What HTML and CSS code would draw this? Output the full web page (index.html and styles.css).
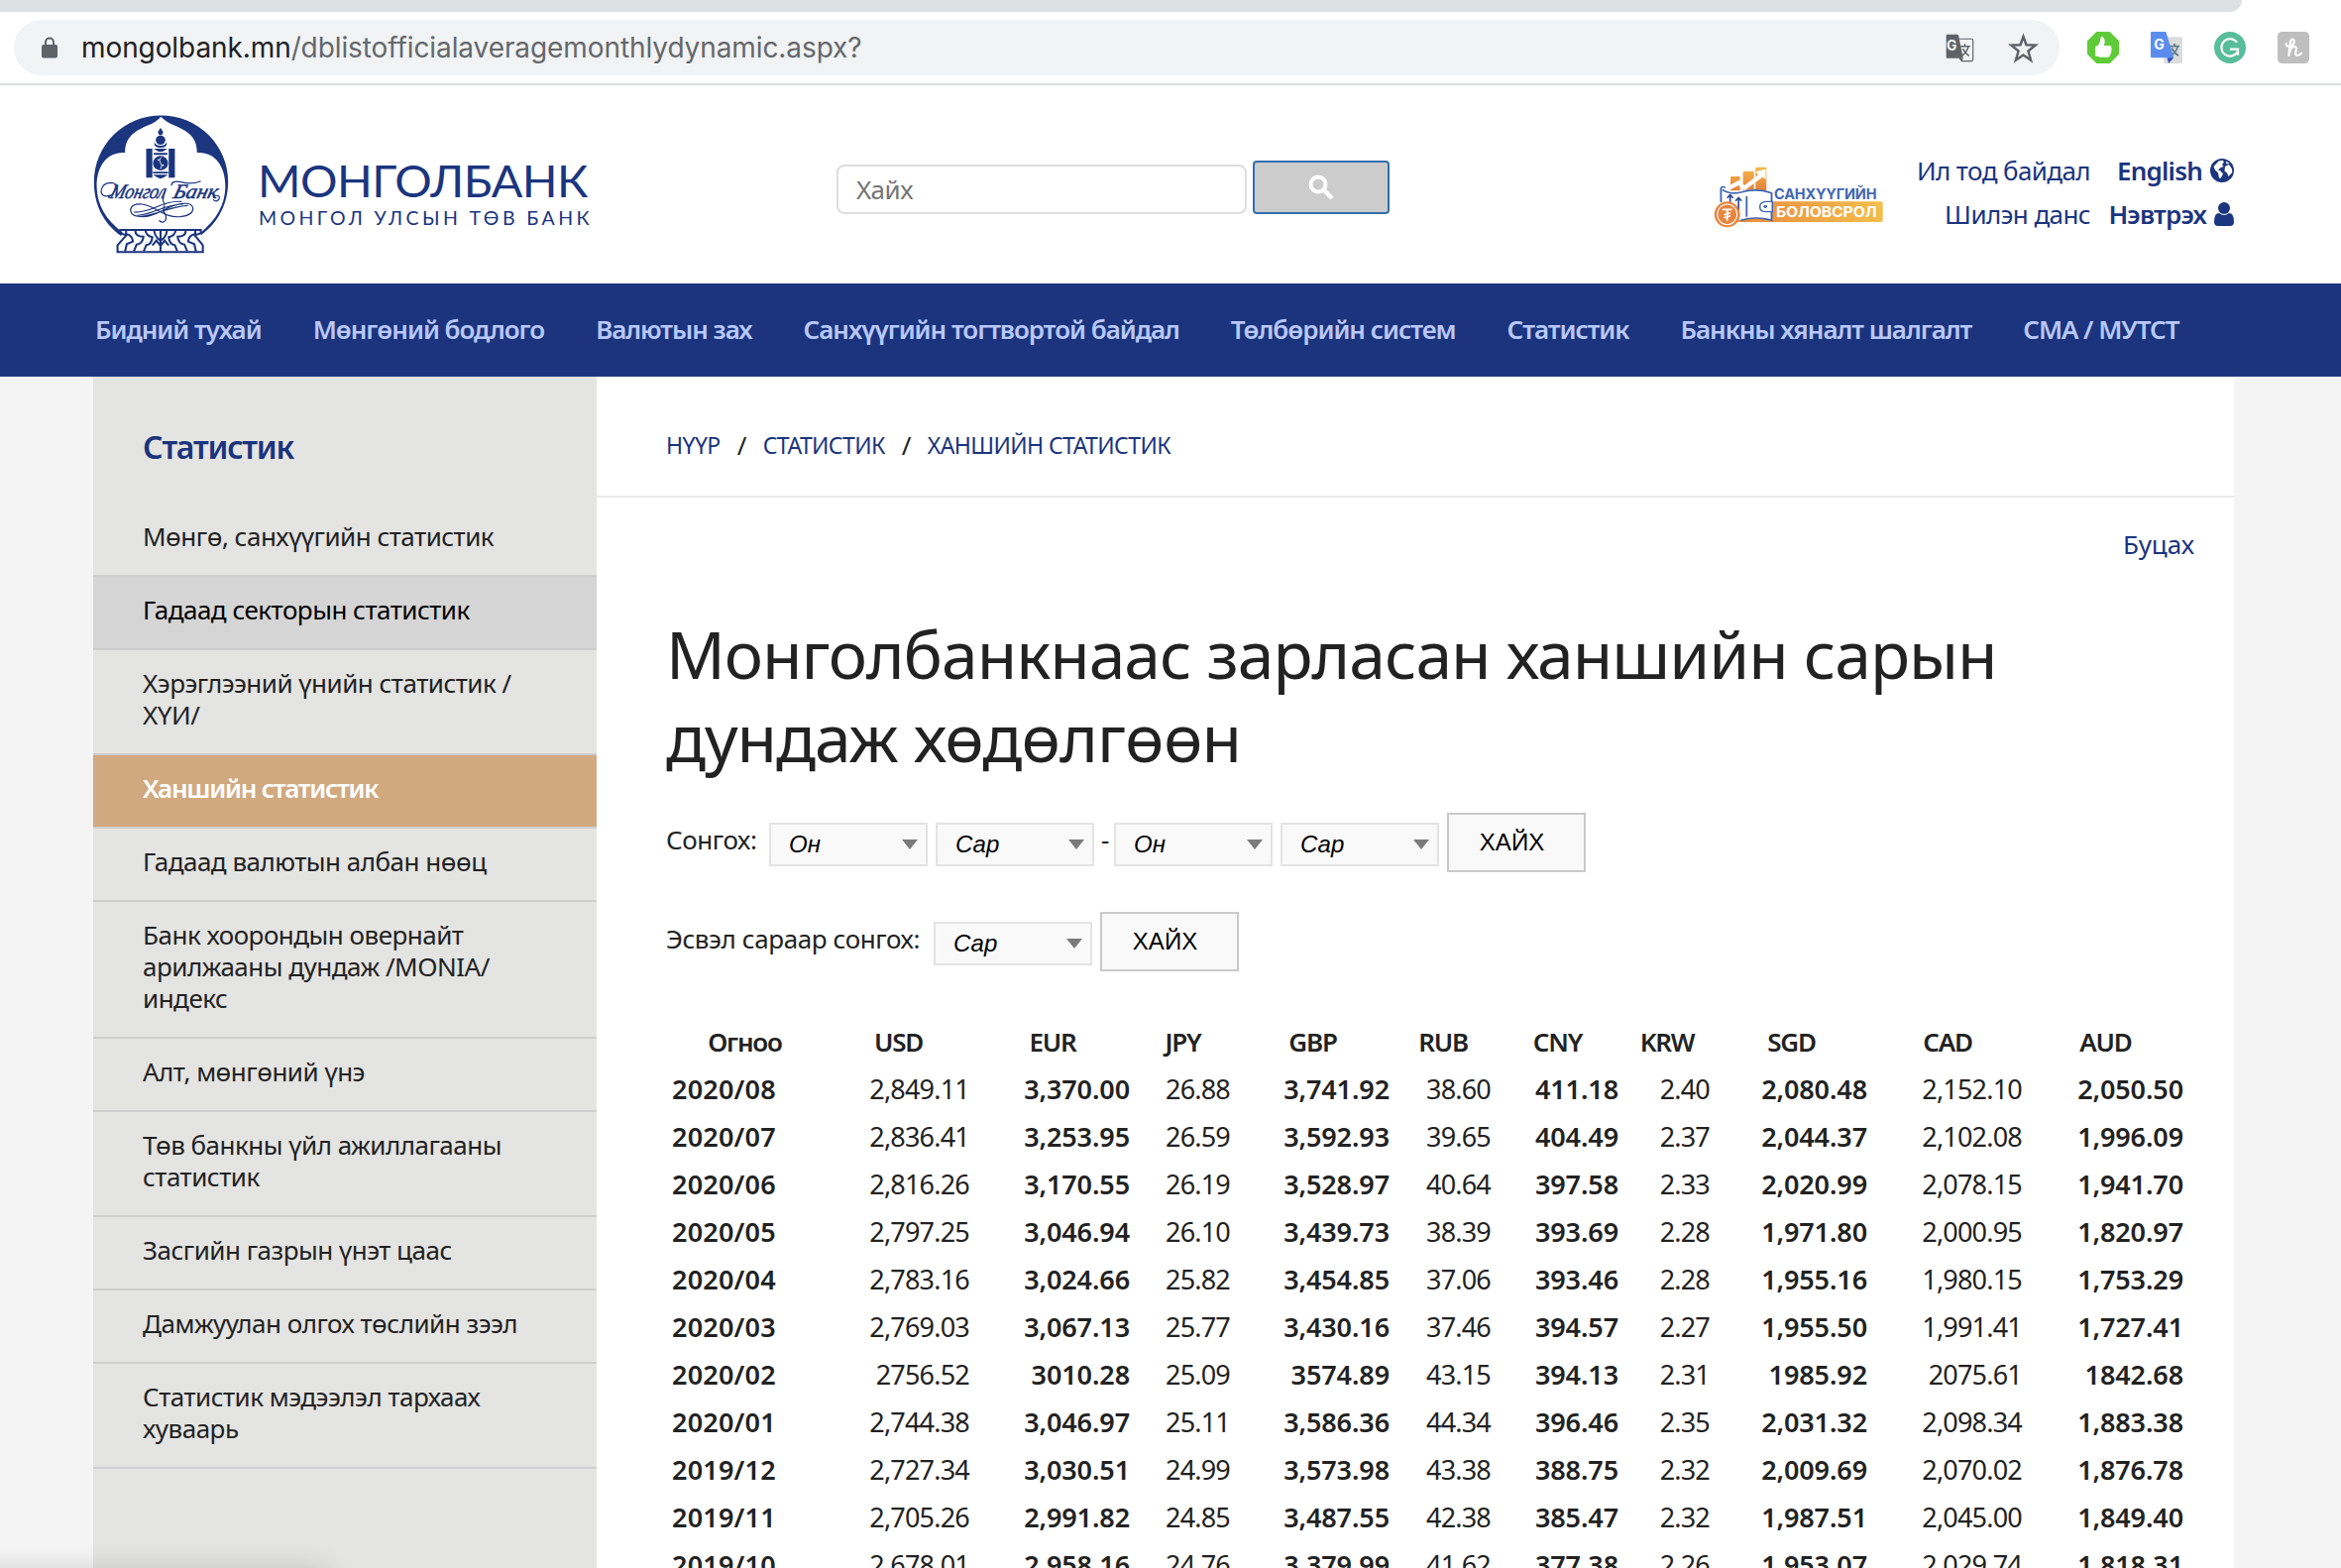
FILE: index.html
```
<!DOCTYPE html>
<html lang="mn">
<head>
<meta charset="utf-8">
<title>Монголбанк</title>
<link rel="stylesheet" href="styles.css">
</head>
<body>
<div class="browser">
  <div class="tabstrip"></div>
  <div class="toolbar">
    <div class="omnibox">
      <svg class="lock" viewBox="0 0 16 22"><path d="M4 9V5.500a4 4 0 0 1 8 0V9" fill="none" stroke="#5f6368" stroke-width="2"/><rect x="0" y="8" width="16" height="13.500" rx="2" fill="#5f6368"/></svg>
      <span class="url"><b>mongolbank.mn</b>/dblistofficialaveragemonthlydynamic.aspx?</span>
      <svg class="omni-icon" viewBox="190 100 88 88">
        <path d="M232 116h37q5 0 5 5v58q0 5-5 5h-29l-8-12" fill="none" stroke="#5f6368" stroke-width="3.500"/>
        <path d="M192 106q0-4 4-4h29q4 0 5 4l14 69h-48q-4 0-4-4z" fill="#5f6368"/><path d="M231 175h13l-4 11z" fill="#5f6368"/>
        <text x="193" y="151" font-family="Inter" font-weight="700" font-size="42" fill="#f1f3f4">G</text>
        <path d="M236 139h29M249 131v8M260 139q-4 17-20 29M243 146q7 14 19 22" fill="none" stroke="#5f6368" stroke-width="4.500"/>
      </svg>
      <svg class="omni-icon" viewBox="382 100 88 88"><path d="M426 109l9 25 28 1-22 18 8 28-23-16-23 16 8-28-22-18 28-1z" fill="none" stroke="#5f6368" stroke-width="7.500"/></svg>
    </div>
    <div class="extensions">
      <svg viewBox="618 96 96 96"><path d="M646 96h40l28 28v40l-28 28h-40l-28-28v-40z" fill="#5fcb38"/><path d="M642 141l8-3q8-9 8-20 0-8 5-7 8 3 8 15l-2 12h17q6 1 5 7 2 3 0 7 1 4-1 7 0 4-2 6-1 8-8 8h-20q-7 0-11-3h-7z" fill="#fff"/></svg>
      <svg viewBox="810 96 96 96"><rect x="850" y="112" width="56" height="80" rx="5" fill="#dcdcdc"/><path d="M866 140h31M882 132v8M892 140q-4 17-20 28M874 145q7 16 20 24" fill="none" stroke="#607d8b" stroke-width="5"/><path d="M814 96h42l24 79h-66q-4 0-4-4v-71q0-4 4-4z" fill="#5b8def"/><path d="M860 175h20l-16 17z" fill="#2f4fc0"/><text x="820" y="151" font-family="Inter" font-weight="700" font-size="42" fill="#fff">G</text></svg>
      <svg viewBox="1002 96 96 96"><circle cx="1050" cy="144" r="48" fill="#57bd9b"/><path d="M1071 128a26 26 0 1 0 2 28M1050 149h24v18" fill="none" stroke="#fff" stroke-width="6.500"/></svg>
      <svg viewBox="1194 96 96 96"><rect x="1194" y="96" width="96" height="96" rx="14" fill="#bfbfbf"/><path d="M1220 132q0 10 11 8 13-3 13-15 0-7-6-6-6 2-6 15l-4 34M1230 158q6-17 15-17 8 0 5 10-4 17 3 17 8 0 13-7" fill="none" stroke="#fff" stroke-width="6.500" stroke-linecap="round"/></svg>
    </div>
  </div>
</div>

<header class="header">
  <div class="brand">
    <svg class="emblem" viewBox="40.600 48 400.800 420" preserveAspectRatio="none" fill="#1b357f">
      <path d="M122 414C70 375 43 320 43 250A196 200 0 0 1 436 250C436 320 405 375 357 412L355 405C402 365 427 320 428 265C428 200 395 158 345 162C345 115 320 98 280 80Q255 70 239 53Q226 70 199 80C160 98 134 115 134 162C84 158 50 200 51 265C52 320 77 365 128 405Z"/>
      <path d="M238 87l8 13-4 9h-8l-4-9z"/><circle cx="238" cy="124" r="14"/>
      <path d="M220 128q3 13 18 13t18-13q3 19-18 19t-18-19zM218 150h40l-14 9h-12zM218 163h40v6h-40zM196 150h18v88h-18zM262 150h18v88h-18zM216 220h44v5h-44zM216 229h44l-11 7-11 5-11-5z"/>
      <circle cx="238" cy="194" r="22"/><path d="M240 176q-9 9-2 17t0 19" fill="none" stroke="#fff" stroke-width="2.500"/><circle cx="232" cy="184" r="2.500" fill="#fff"/><circle cx="245" cy="200" r="2.500" fill="#fff"/>
      <g font-family="Liberation Serif" font-style="italic" font-size="62" stroke="#1b357f" stroke-width="1.500">
        <text transform="translate(88 299) skewX(-14)" textLength="162" lengthAdjust="spacingAndGlyphs">Монгол</text>
        <text transform="translate(272 299) skewX(-14)" textLength="130" lengthAdjust="spacingAndGlyphs">Банк</text>
      </g>
      <g fill="none" stroke="#1b357f" stroke-width="3.500">
        <path d="M100 288q-33 14-36-8 1-25 27-27 22 0 16 18-8 20-23 27M270 262q0-17 28-11 32 9 58-3M396 292q18-2 14 10-8 12-18 2"/>
        <path d="M252 278q-14 28 0 42M150 338q0-22 34-20c42 6 62 42 112 38q38-4 37-26-2-16-30-14c-48 4-72 40-118 40q-32 0-35-18zM160 342c50 4 82-36 140-32M170 352c50-4 80-34 134-34M178 356c56-8 84-30 140-34M250 322q-8 12 1 24 8 20-3 25-9 4-14-4"/>
        <path stroke-width="6" d="M120 396h236v10l-18 6 24 30v21H112v-21l26-30-18-6z"/>
        <path stroke-width="6" d="M137 397v12q18 2 20 22l-18 8-5 22M164 398q0 18 24 18-2 22-20 24l-8 20M194 398q2 16 20 20-2 22-18 24l-7 18M219 398q4 22 19 30 16-8 19-30M238 398v65M282 398q-2 16-20 20 2 22 18 24l7 18M312 398q0 18-24 18 2 22 20 24l8 20M340 397v12q-19 2-21 22l18 8 5 22M214 443l12-15 12 16 12-16 12 15"/>
      </g>
    </svg>
    <svg class="wordmark" viewBox="0 0 334 72" fill="#1b357f" font-family="Lato, sans-serif">
      <text x="-2" y="44" font-size="44.500" textLength="333" lengthAdjust="spacingAndGlyphs">МОНГОЛБАНК</text>
      <text x="-1" y="72" font-size="19.500" textLength="333">МОНГОЛ УЛСЫН ТӨВ БАНК</text>
    </svg>
  </div>
  <form class="search">
    <div class="search-input">Хайх</div>
    <div class="search-button"><svg viewBox="0 0 26 26"><circle cx="10" cy="10" r="7.500" fill="none" stroke="#fff" stroke-width="4"/><path d="M16 16l8 8" stroke="#fff" stroke-width="4.500"/></svg></div>
  </form>
  <div class="tools">
    <svg class="finlogo" viewBox="80 80 470 195" preserveAspectRatio="none">
      <defs><linearGradient id="org" x1="0" x2="1"><stop offset="0" stop-color="#e8873c"/><stop offset="1" stop-color="#f4be4c"/></linearGradient><linearGradient id="bar" x1="0" x2="0" y1="0" y2="1"><stop offset="0" stop-color="#f4b94a"/><stop offset="1" stop-color="#e5803c"/></linearGradient></defs>
      <path d="M126 120q0-4 4-4h22v43h-26zM160 104q0-4 4-4h26v57h-30zM194 92q0-4 4-4h26v71h-30z" fill="url(#bar)"/>
      <path d="M103 156l46-29 15 16 38-32-8-9 28-8v30l-9-6-48 40-17-15-38 22z" fill="#fff"/>
      <path d="M118 254h417q6 0 6-6v-50q0-6-6-6H238z" fill="url(#org)"/>
      <path d="M100 156q22 18 54 6 42-14 84 4v83q-42-14-84 0l-54-20z" fill="#fff"/>
      <path d="M100 194v-42q2-8 12-2M104 156q22 16 50 8 42-14 84 2v83q-42-14-84 0M170 176v62" fill="none" stroke="#4267b0" stroke-width="5"/>
      <path d="M240 192h-18q-16 2-16 16t16 15h18z" fill="#fff" stroke="#4267b0" stroke-width="4"/><circle cx="221" cy="207" r="5" fill="#4267b0"/>
      <path d="M125 194v-20m-8 7l8-10 8 10M148 232v-50m-8 8l8-10 8 10" fill="none" stroke="#2c4a94" stroke-width="4.500"/>
      <ellipse cx="117" cy="231" rx="35" ry="39" fill="#e8853f"/><ellipse cx="117" cy="231" rx="27" ry="31" fill="none" stroke="#fff" stroke-width="3"/>
      <path d="M104 216h26M117 216v34M108 232l18-6M108 241l18-6" stroke="#fff" stroke-width="5"/>
      <text x="245" y="186" font-family="Inter" font-weight="700" font-size="43" fill="#4267b0" textLength="279" lengthAdjust="spacingAndGlyphs">САНХҮҮГИЙН</text>
      <text x="250" y="239" font-family="Inter" font-weight="700" font-size="43" fill="#fff" textLength="274" lengthAdjust="spacingAndGlyphs">БОЛОВСРОЛ</text>
    </svg>
    <div class="links"><span>Ил тод байдал</span><span>Шилэн данс</span></div>
    <div class="links account">
      <span>English <svg viewBox="0 0 24 24"><circle cx="12" cy="12" r="12" fill="#1b357f"/><path d="M8.500 2.500l4-.8 1.500 1.800-2 2.500 1.500 2-3 1.200-2.500 2.300 2.500 1 2.500 3-2.500 4.500-1.500-.5-1-5-3-3-1.500-3.500zM15 8l4-2 3 4.500.3 3.500-3.800 4-1.500-3.500-2.500-2zM16 2.500l3.500 2.500-3 .5z" fill="#fff"/></svg></span>
      <span>Нэвтрэх <svg class="user" viewBox="0 0 20 24"><circle cx="10" cy="6" r="6" fill="#1b357f"/><path d="M0 20q0-9 5-9 5 4 10 0 5 0 5 9 0 4-4 4H4q-4 0-4-4z" fill="#1b357f"/></svg></span>
    </div>
  </div>
</header>

<nav class="nav">
  <a>Бидний тухай</a><a>Мөнгөний бодлого</a><a>Валютын зах</a><a>Санхүүгийн тогтвортой байдал</a><a>Төлбөрийн систем</a><a>Статистик</a><a>Банкны хяналт шалгалт</a><a>СМА / МУТСТ</a>
</nav>

<div class="page">
  <aside class="sidebar">
    <h2>Статистик</h2>
    <ul>
      <li>Мөнгө, санхүүгийн статистик</li>
      <li class="hover">Гадаад секторын статистик</li>
      <li>Хэрэглээний үнийн статистик /<br>ХҮИ/</li>
      <li class="active">Ханшийн статистик</li>
      <li>Гадаад валютын албан нөөц</li>
      <li>Банк хоорондын овернайт<br>арилжааны дундаж /MONIA/<br>индекс</li>
      <li>Алт, мөнгөний үнэ</li>
      <li>Төв банкны үйл ажиллагааны<br>статистик</li>
      <li>Засгийн газрын үнэт цаас</li>
      <li>Дамжуулан олгох төслийн зээл</li>
      <li>Статистик мэдээлэл тархаах<br>хуваарь</li>
    </ul>
  </aside>
  <main class="content">
    <div class="crumbs"><a>НҮҮР</a><i>/</i><a>СТАТИСТИК</a><i>/</i><a>ХАНШИЙН СТАТИСТИК</a></div>
    <div class="back">Буцах</div>
    <h1>Монголбанкнаас зарласан ханшийн сарын<br>дундаж хөдөлгөөн</h1>
    <div class="filter">
      <label>Сонгох:</label>
      <div class="select">Он</div><div class="select">Сар</div><span class="dash">-</span><div class="select">Он</div><div class="select">Сар</div>
      <div class="button">ХАЙХ</div>
    </div>
    <div class="filter month">
      <label>Эсвэл сараар сонгох:</label>
      <div class="select">Сар</div>
      <div class="button">ХАЙХ</div>
    </div>
    <table class="rates">
      <colgroup><col class="c-date"><col class="c-usd"><col class="c-eur"><col class="c-jpy"><col class="c-gbp"><col class="c-rub"><col class="c-cny"><col class="c-krw"><col class="c-sgd"><col class="c-cad"><col class="c-aud"></colgroup>
      <tr><th>Огноо</th><th>USD</th><th>EUR</th><th>JPY</th><th>GBP</th><th>RUB</th><th>CNY</th><th>KRW</th><th>SGD</th><th>CAD</th><th>AUD</th></tr>
      <tr><td>2020/08</td><td>2,849.11</td><td>3,370.00</td><td>26.88</td><td>3,741.92</td><td>38.60</td><td>411.18</td><td>2.40</td><td>2,080.48</td><td>2,152.10</td><td>2,050.50</td></tr>
      <tr><td>2020/07</td><td>2,836.41</td><td>3,253.95</td><td>26.59</td><td>3,592.93</td><td>39.65</td><td>404.49</td><td>2.37</td><td>2,044.37</td><td>2,102.08</td><td>1,996.09</td></tr>
      <tr><td>2020/06</td><td>2,816.26</td><td>3,170.55</td><td>26.19</td><td>3,528.97</td><td>40.64</td><td>397.58</td><td>2.33</td><td>2,020.99</td><td>2,078.15</td><td>1,941.70</td></tr>
      <tr><td>2020/05</td><td>2,797.25</td><td>3,046.94</td><td>26.10</td><td>3,439.73</td><td>38.39</td><td>393.69</td><td>2.28</td><td>1,971.80</td><td>2,000.95</td><td>1,820.97</td></tr>
      <tr><td>2020/04</td><td>2,783.16</td><td>3,024.66</td><td>25.82</td><td>3,454.85</td><td>37.06</td><td>393.46</td><td>2.28</td><td>1,955.16</td><td>1,980.15</td><td>1,753.29</td></tr>
      <tr><td>2020/03</td><td>2,769.03</td><td>3,067.13</td><td>25.77</td><td>3,430.16</td><td>37.46</td><td>394.57</td><td>2.27</td><td>1,955.50</td><td>1,991.41</td><td>1,727.41</td></tr>
      <tr><td>2020/02</td><td>2756.52</td><td>3010.28</td><td>25.09</td><td>3574.89</td><td>43.15</td><td>394.13</td><td>2.31</td><td>1985.92</td><td>2075.61</td><td>1842.68</td></tr>
      <tr><td>2020/01</td><td>2,744.38</td><td>3,046.97</td><td>25.11</td><td>3,586.36</td><td>44.34</td><td>396.46</td><td>2.35</td><td>2,031.32</td><td>2,098.34</td><td>1,883.38</td></tr>
      <tr><td>2019/12</td><td>2,727.34</td><td>3,030.51</td><td>24.99</td><td>3,573.98</td><td>43.38</td><td>388.75</td><td>2.32</td><td>2,009.69</td><td>2,070.02</td><td>1,876.78</td></tr>
      <tr><td>2019/11</td><td>2,705.26</td><td>2,991.82</td><td>24.85</td><td>3,487.55</td><td>42.38</td><td>385.47</td><td>2.32</td><td>1,987.51</td><td>2,045.00</td><td>1,849.40</td></tr>
      <tr><td>2019/10</td><td>2,678.01</td><td>2,958.16</td><td>24.76</td><td>3,379.99</td><td>41.62</td><td>377.38</td><td>2.26</td><td>1,953.07</td><td>2,029.74</td><td>1,818.31</td></tr>
    </table>
  </main>
</div>
<div class="status-shadow"></div>
</body>
</html>
```
FILE: styles.css
```
* { box-sizing: border-box; }
html { overflow: hidden; }
body {
  margin: 0;
  width: 2362px;
  height: 1582px;
  overflow: hidden;
  position: relative;
  background: #f4f4f4;
  color: #222;
  font: 26px "Noto Sans", sans-serif;
  letter-spacing: -0.5px;
  white-space: nowrap;
}
svg { display: block; flex: none; overflow: visible; }

/* browser toolbar */
.browser { height: 86px; background: #fff; border-bottom: 2px solid #dcdde0; }
.tabstrip { width: 2262px; height: 12px; background: #dee0e4; border-radius: 0 0 14px 0; }
.toolbar { display: flex; align-items: center; padding: 8px 0 0 14px; }
.omnibox {
  display: flex;
  align-items: center;
  width: 2064px;
  height: 56px;
  padding: 0 22px 0 28px;
  border-radius: 28px;
  background: #f1f3f4;
}
.lock { width: 16px; height: 22px; }
.url { flex: 1; margin-left: 24px; font: 28px Inter, sans-serif; letter-spacing: -0.09px; color: #65686c; }
.url b { font-weight: 400; color: #202124; }
.omni-icon { width: 29px; height: 29px; }
.omni-icon + .omni-icon { margin-left: 35px; }
.extensions { display: flex; gap: 32px; margin-left: 28px; }
.extensions svg { width: 32px; height: 32px; }

/* site header */
.header {
  display: grid;
  grid-template-columns: 750px 558px 1fr;
  height: 200px;
  padding: 0 108px 0 94px;
  background: #fff;
  color: #1b357f;
}
.brand { display: flex; align-items: center; }
.emblem { width: 138px; height: 140px; }
.wordmark { width: 334px; height: 72px; margin: 10px 0 0 30px; }
.search { display: flex; align-items: flex-end; gap: 6px; height: 54px; margin-top: 76px; }
.search-input {
  width: 414px;
  height: 50px;
  padding-left: 18px;
  border: 2px solid #ddd;
  border-radius: 8px;
  line-height: 47px;
  color: #757575;
}
.search-button {
  display: flex;
  justify-content: center;
  width: 138px;
  height: 54px;
  padding-top: 12px;
  border: 2px solid #3070ad;
  border-radius: 4px;
  background: #ccc;
}
.search-button svg { width: 26px; height: 26px; }
.tools { display: flex; justify-content: flex-end; align-items: flex-start; padding-top: 64px; }
.finlogo { width: 174px; height: 65px; margin: 16px 32px 0 0; }
.links { width: 174px; display: flex; flex-direction: column; align-items: flex-end; line-height: 44px; letter-spacing: -0.6px; }
.account { width: 145px; font-weight: 600; letter-spacing: -0.8px; }
.account span { display: flex; align-items: center; gap: 8px; }
.account svg { width: 24px; height: 24px; }
.account .user { width: 20px; }

/* main navigation */
.nav {
  display: flex;
  gap: 52px;
  height: 94px;
  padding-left: 96px;
  background: #1b347d;
  color: #b9c8fa;
  font-weight: 600;
  line-height: 92px;
  letter-spacing: -1.04px;
}

/* page body */
.page { display: flex; width: 2160px; height: 1202px; margin-left: 94px; background: #fff; }
.sidebar { width: 508px; background: #e4e4e2; }
.sidebar h2 { margin: 0; padding: 15px 0 1px 50px; font-size: 32px; font-weight: 600; line-height: 112px; letter-spacing: -1.2px; color: #1b347d; }
.sidebar ul { margin: 0; padding: 0; list-style: none; }
.sidebar li { padding: 17px 0 23px 50px; border-bottom: 2px solid #cecece; line-height: 32px; }
.sidebar .hover { background: #d5d5d5; color: #000; }
.sidebar .active { background: #d1a980; color: #fff; font-weight: 600; letter-spacing: -1.25px; }

.content { flex: 1; }
.crumbs {
  display: flex;
  height: 122px;
  padding: 18px 0 0 70px;
  border-bottom: 2px solid #eaeaea;
  font-size: 23px;
  line-height: 102px;
  letter-spacing: -0.6px;
  color: #1b347d;
}
.crumbs i { margin: 0 17px; font-size: 26px; font-style: normal; color: #222; }
.back { padding-right: 40px; text-align: right; line-height: 95px; letter-spacing: 0; color: #1b347d; }
h1 { margin: 20px 0 35px 70px; font-size: 66px; font-weight: 400; line-height: 84px; letter-spacing: -1.03px; }
.filter { display: flex; gap: 8px; height: 60px; margin: 0 0 40px 70px; }
.filter label { width: 96px; line-height: 55px; letter-spacing: -0.4px; }
.filter.month { margin-bottom: 47px; }
.filter.month label { width: 262px; }
.dash { width: 6px; margin: 0 -1px; line-height: 55px; }
.select {
  display: flex;
  justify-content: space-between;
  align-items: center;
  width: 160px;
  height: 44px;
  margin-top: 10px;
  padding: 0 8px 0 18px;
  border: 2px solid #e3e3e3;
  background: #f9f9f9;
  color: #000;
  font: italic 24px "Liberation Sans", sans-serif;
  letter-spacing: 0;
}
.select::after { content: ""; border: 8px solid transparent; border-top: 10px solid #7b7b7b; border-bottom: 0; }
.button {
  width: 140px;
  height: 60px;
  padding-right: 9px;
  border: 2px solid #c9c9c9;
  background: #f9f9f9;
  color: #000;
  font: 24px/55px "Liberation Sans", sans-serif;
  letter-spacing: 0;
  text-align: center;
}

/* exchange rates */
.rates { width: 1535px; margin-left: 70px; table-layout: fixed; border-collapse: collapse; font-size: 27px; letter-spacing: -0.1px; }
.rates tr { height: 48px; }
.rates th, .rates td { padding: 0 4px 0 6px; line-height: 48px; font-weight: 600; text-align: right; }
.rates th { padding: 0 7px 0 5px; font-size: 26px; letter-spacing: -1.2px; text-align: center; }
.rates td:first-child { text-align: left; letter-spacing: 0.2px; }
.rates td:nth-child(2n) { font-weight: 400; letter-spacing: -0.8px; }
.c-date { width: 161px; }
.c-usd { width: 149px; }
.c-eur { width: 162px; }
.c-jpy { width: 101px; }
.c-gbp { width: 161px; }
.c-rub { width: 102px; }
.c-cny { width: 129px; }
.c-krw { width: 92px; }
.c-sgd { width: 159px; }
.c-cad { width: 156px; }
.c-aud { width: 163px; }

.status-shadow {
  position: absolute;
  left: -60px;
  bottom: -24px;
  width: 390px;
  height: 20px;
  box-shadow: 0 0 28px rgba(0, 0, 0, .2);
}
```
